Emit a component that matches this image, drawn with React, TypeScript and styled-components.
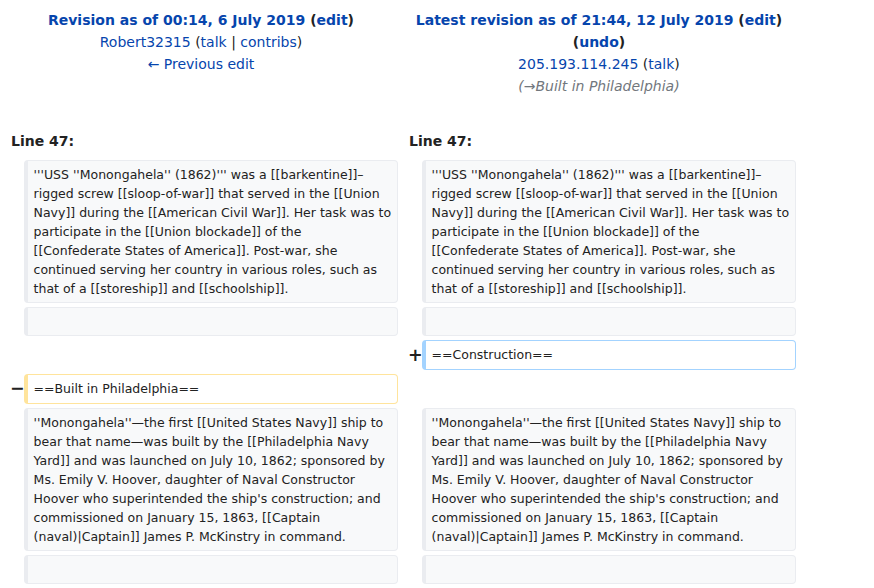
import React from "react";
import styled, { createGlobalStyle } from "styled-components";

const GlobalStyle = createGlobalStyle`
  html, body { margin: 0; padding: 0; background: #ffffff; }
  body {
    font-family: "DejaVu Sans", sans-serif;
    font-size: 14px;
    line-height: 1.6;
    color: #222222;
  }
`;

const DiffGrid = styled.div`
  display: grid;
  width: 800px;
  box-sizing: border-box;
  padding: 4px;
  gap: 4px;
  grid-template-columns: 15.6px 374.4px 15.6px 374.4px;
`;

const TitleCell = styled.div`
  grid-column: span 2;
  text-align: center;
  padding: 4.6px 7px 2.6px;
  line-height: 22px;
`;

const LineNo = styled.div`
  grid-column: span 2;
  padding: 4.6px 7px 3.6px;
  font-weight: bold;
  line-height: 22.4px;
`;

const Link = styled.a`
  color: #0645ad;
  text-decoration: none;
  cursor: pointer;
`;

const Strong = styled.div`
  font-weight: bold;
`;

const Comment = styled.div`
  font-style: italic;
  color: #72777d;
`;

const Marker = styled.div`
  display: flex;
  align-items: center;
  justify-content: flex-end;
  font-weight: bold;
  font-size: 17.5px;
  line-height: 1.2;
  padding: 4.375px 0;
  margin-right: -5px;
  white-space: nowrap;
`;

const Empty = styled.div`
  grid-column: span 2;
`;

type Kind = "context" | "added" | "deleted";

const borders: Record<Kind, string> = {
  context: "#eaecf0",
  added: "#a3d3ff",
  deleted: "#ffe49c",
};

const Line = styled.div<{ $kind: Kind }>`
  box-sizing: border-box;
  border-style: solid;
  border-width: 1px 1px 1px 4px;
  border-color: ${(p) => borders[p.$kind]};
  border-radius: 4px;
  background: ${(p) => (p.$kind === "context" ? "#f8f9fa" : "#ffffff")};
  font-size: 12.5px;
  line-height: 19.05px;
  padding: 4px 6px;
  white-space: pre;
  overflow: hidden;
  color: #222222;
`;

const para1 = [
  "'''USS ''Monongahela'' (1862)''' was a [[barkentine]]–",
  "rigged screw [[sloop-of-war]] that served in the [[Union",
  "Navy]] during the [[American Civil War]]. Her task was to",
  "participate in the [[Union blockade]] of the",
  "[[Confederate States of America]]. Post-war, she",
  "continued serving her country in various roles, such as",
  "that of a [[storeship]] and [[schoolship]].",
].join("\n");

const para2 = [
  "''Monongahela''—the first [[United States Navy]] ship to",
  "bear that name—was built by the [[Philadelphia Navy",
  "Yard]] and was launched on July 10, 1862; sponsored by",
  "Ms. Emily V. Hoover, daughter of Naval Constructor",
  "Hoover who superintended the ship's construction; and",
  "commissioned on January 15, 1863, [[Captain",
  "(naval)|Captain]] James P. McKinstry in command.",
].join("\n");

const ContextRow: React.FC<{ text: string }> = ({ text }) => (
  <>
    <Marker />
    <Line $kind="context">{text === "" ? <br /> : text}</Line>
    <Marker />
    <Line $kind="context">{text === "" ? <br /> : text}</Line>
  </>
);

export default function App() {
  return (
    <>
      <GlobalStyle />
      <DiffGrid>
        <TitleCell>
          <Strong>
            <Link>Revision as of 00:14, 6 July 2019</Link> (<Link>edit</Link>)
          </Strong>
          <div>
            <Link>Robert32315</Link> (<Link>talk</Link> | <Link>contribs</Link>)
          </div>
          <div>
            <Link>← Previous edit</Link>
          </div>
        </TitleCell>
        <TitleCell>
          <Strong>
            <Link>Latest revision as of 21:44, 12 July 2019</Link> (<Link>edit</Link>)
          </Strong>
          <Strong>
            (<Link>undo</Link>)
          </Strong>
          <div>
            <Link>205.193.114.245</Link> (<Link>talk</Link>)
          </div>
          <Comment>(→Built in Philadelphia)</Comment>
          <div>&nbsp;</div>
        </TitleCell>

        <LineNo>Line 47:</LineNo>
        <LineNo>Line 47:</LineNo>

        <ContextRow text={para1} />
        <ContextRow text="" />

        <Empty />
        <Marker>+</Marker>
        <Line $kind="added">==Construction==</Line>

        <Marker>−</Marker>
        <Line $kind="deleted">==Built in Philadelphia==</Line>
        <Empty />

        <ContextRow text={para2} />
        <ContextRow text="" />
      </DiffGrid>
    </>
  );
}
